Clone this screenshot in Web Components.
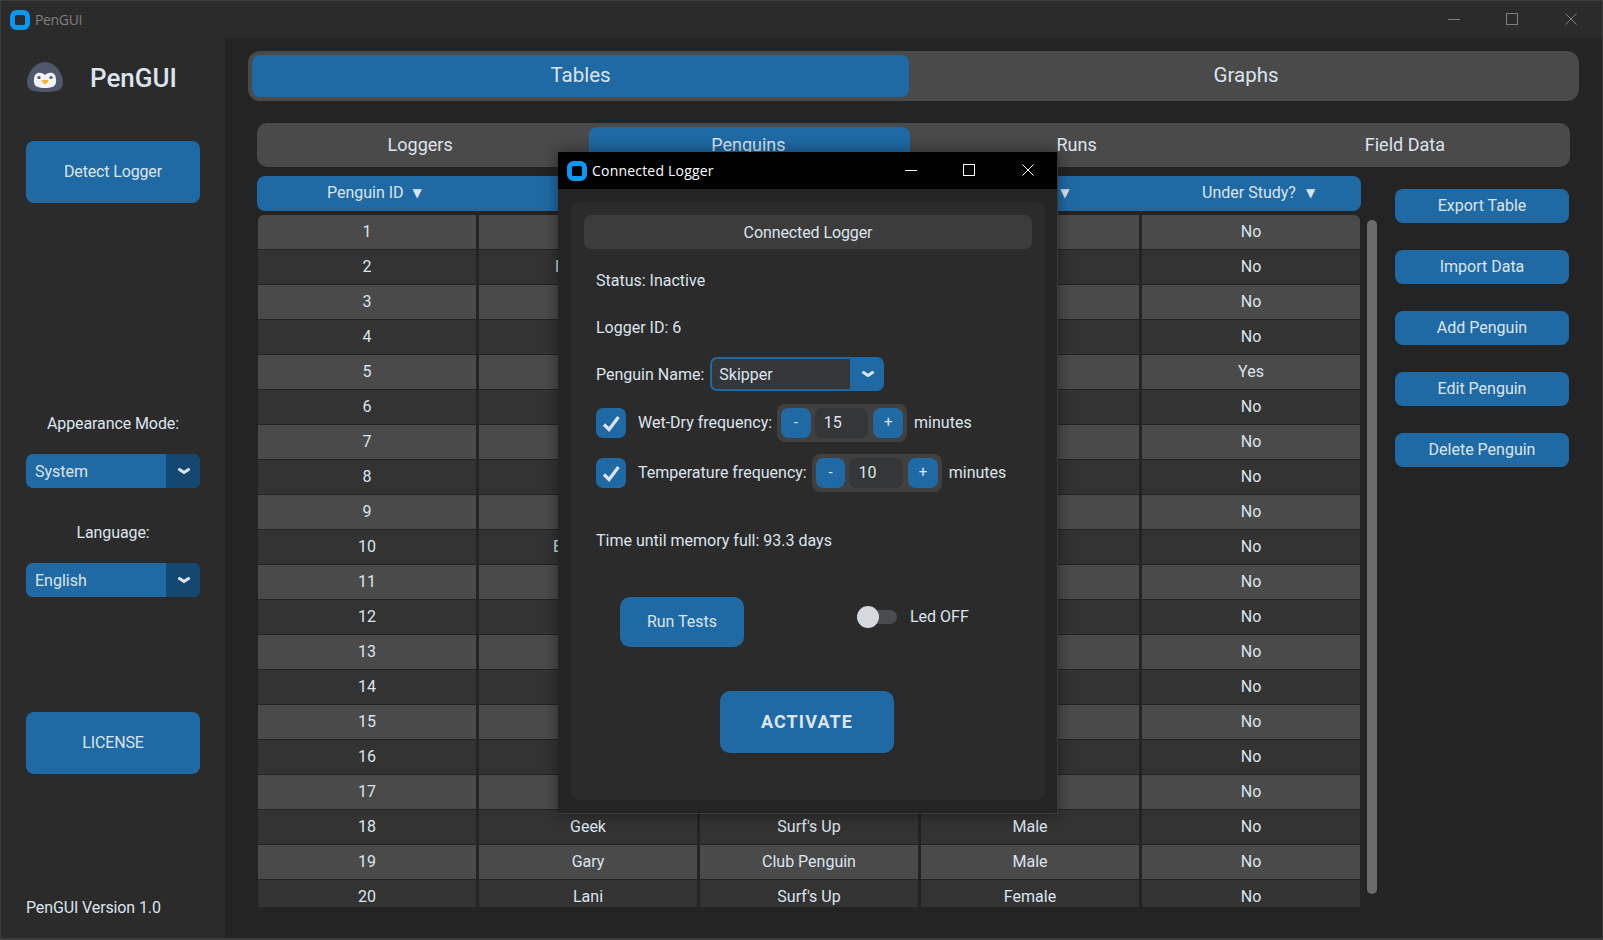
<!DOCTYPE html>
<html>
<head>
<meta charset="utf-8">
<title>PenGUI</title>
<style>
  html, body { margin: 0; height: 940px; overflow: hidden; background: #2b2b2b; }
  body { font: 16px Roboto, "Liberation Sans", sans-serif; color: #dce4ee; }
</style>
</head>
<body>
<pen-app></pen-app>
<script>
const CHEVRON = `<svg width="12" height="7" viewBox="0 0 12 7"><path d="M1.5 1.500 6 4.600 10.500 1.500" fill="none" stroke="#dce4ee" stroke-width="3" stroke-linecap="round" stroke-linejoin="round"/></svg>`;

class PenButton extends HTMLElement {
  constructor() {
    super();
    this.attachShadow({ mode: 'open' });
    this.shadowRoot.innerHTML = `
      <style>
        :host { display: flex; align-items: center; justify-content: center; box-sizing: border-box; padding-bottom: 2px; background: #1f6aa5; border-radius: 8px; color: #dce4ee; }
      </style>
      <slot></slot>
    `;
  }
}
customElements.define('pen-button', PenButton);

class PenCombo extends HTMLElement {
  constructor() {
    super();
    this.attachShadow({ mode: 'open' });
    this.shadowRoot.innerHTML = `
      <style>
        :host { display: flex; width: 174px; height: 34px; box-sizing: border-box; border-radius: 7px; overflow: hidden; background: #1f6aa5; }
        :host([outlined]) { background: #343638; border: 2px solid #1f6aa5; }
        .value { flex: 1; display: flex; align-items: center; padding-left: 9px; }
        :host([outlined]) .value { padding-left: 7px; }
        .arrow { width: 34px; box-sizing: border-box; padding-left: 2px; display: flex; align-items: center; justify-content: center; background: #144870; }
        :host([outlined]) .arrow { background: #1f6aa5; width: 32px; padding-left: 3px; }
      </style>
      <div class="value"><slot></slot></div>
      <div class="arrow">${CHEVRON}</div>
    `;
  }
}
customElements.define('pen-combo', PenCombo);

class WindowBar extends HTMLElement {
  constructor() {
    super();
    this.attachShadow({ mode: 'open' });
    this.shadowRoot.innerHTML = `
      <style>
        :host { display: flex; align-items: center; height: 37px; padding-left: 9px; background: #2b2b2b; color: #7f7f7f; font: 14px "Open Sans", "Noto Sans", sans-serif; }
        :host([active]) { background: #000; color: #fff; }
        svg { display: block; }
        .logo { margin-right: 5px; }
        .title { flex: 1; letter-spacing: -.35px; }
        :host([active]) .title { letter-spacing: .2px; }
        .ctl { width: 58px; margin-top: -2px; display: flex; justify-content: center; }
        .ctl:last-child { margin-left: 1px; margin-right: 2px; }
        :host([active]) .ctl:last-child { margin-right: 0; }
      </style>
      <svg class="logo" width="20" height="20" viewBox="0 0 20 20"><rect x="2.500" y="2.500" width="15" height="15" rx="4" fill="none" stroke="#0a97f5" stroke-width="5"/></svg>
      <span class="title"><slot></slot></span>
      <span class="ctl"><svg width="12" height="12" viewBox="0 0 12 12"><path d="M0 6.500H12" stroke="currentColor" fill="none"/></svg></span>
      <span class="ctl"><svg width="12" height="12" viewBox="0 0 12 12"><rect x=".5" y=".5" width="11" height="11" stroke="currentColor" fill="none"/></svg></span>
      <span class="ctl"><svg width="12" height="12" viewBox="0 0 12 12"><path d="M.5 .5 11.500 11.500M11.500 .5 .5 11.500" stroke="currentColor" fill="none"/></svg></span>
    `;
  }
}
customElements.define('window-bar', WindowBar);

class PenSidebar extends HTMLElement {
  constructor() {
    super();
    this.attachShadow({ mode: 'open' });
    this.shadowRoot.innerHTML = `
      <style>
        :host { display: flex; flex-direction: column; width: 224px; box-sizing: border-box; padding: 23px 0 0 25px; background: #2b2b2b; }
        .brand { display: flex; align-items: center; height: 31px; }
        .brand svg { margin: 1px 0 0 1px; }
        .brand b { margin: 2px 0 0 27px; font-size: 26px; font-weight: 500; }
        pen-button { width: 174px; height: 62px; letter-spacing: -.15px; }
        .label { width: 174px; height: 20px; line-height: 20px; text-align: center; letter-spacing: -.1px; }
        .version { height: 20px; line-height: 20px; margin-top: 124px; letter-spacing: -.12px; }
      </style>
      <div class="brand">
        <svg width="36" height="30" viewBox="0 0 36 30">
          <path d="M18 0C28 0 36 11 36 21 36 28 30 30 18 30 6 30 0 28 0 21 0 11 8 0 18 0Z" fill="#50566b"/>
          <path d="M18 13C20 10 29 8.500 29 17 30 24 26 26 18 26 10 26 6 24 7 17 7 8.500 16 10 18 13Z" fill="#f3f2f8"/>
          <circle cx="12" cy="15.500" r="1.600" fill="#50566b"/>
          <circle cx="24" cy="15.500" r="1.600" fill="#50566b"/>
          <path d="M14.500 18H21.500C21 20.500 19.500 22 18 22 16.500 22 15 20.500 14.500 18Z" fill="#f5b43c"/>
        </svg>
        <b>PenGUI</b>
      </div>
      <pen-button style="margin-top:49px">Detect Logger</pen-button>
      <div class="label" style="margin-top:211px">Appearance Mode:</div>
      <pen-combo style="margin-top:20px">System</pen-combo>
      <div class="label" style="margin-top:35px">Language:</div>
      <pen-combo style="margin-top:20px">English</pen-combo>
      <pen-button style="margin-top:115px">LICENSE</pen-button>
      <div class="version">PenGUI Version 1.0</div>
    `;
  }
}
customElements.define('pen-sidebar', PenSidebar);

class PenTabs extends HTMLElement {
  constructor() {
    super();
    this.attachShadow({ mode: 'open' });
    this.shadowRoot.innerHTML = `
      <style>
        :host { display: block; }
        .main { display: grid; grid-template-columns: 657px 1fr; gap: 8px; height: 42px; padding: 4px; background: #4a4a4a; border-radius: 12px; font-size: 20.5px; }
        .sub { display: grid; grid-template-columns: repeat(4, 1fr); gap: 8px; height: 36px; padding: 4px; margin: 22px 9px 0; background: #4a4a4a; border-radius: 10px; font-size: 18px; }
        span { display: flex; align-items: center; justify-content: center; box-sizing: border-box; padding-bottom: 2px; border-radius: 8px; }
        .sub span { padding-right: 2px; }
        .on { background: #1f6aa5; }
      </style>
      <div class="main"><span class="on">Tables</span><span>Graphs</span></div>
      <div class="sub"><span>Loggers</span><span class="on">Penguins</span><span>Runs</span><span>Field Data</span></div>
    `;
  }
}
customElements.define('pen-tabs', PenTabs);

class PenTable extends HTMLElement {
  constructor() {
    super();
    this.attachShadow({ mode: 'open' });
    // the columns in the middle sit behind the dialog, only the lower rows show
    var rows = [];
    for (var i = 1; i <= 20; i++) rows.push([i, '', '', '', i === 5 ? 'Yes' : 'No']);
    rows[1][1] = '<i style="padding-left:76px">L</i>';
    rows[9][1] = '<i style="padding-left:74px">E</i>';
    rows[17] = [18, 'Geek', "Surf's Up", 'Male', 'No'];
    rows[18] = [19, 'Gary', 'Club Penguin', 'Male', 'No'];
    rows[19] = [20, 'Lani', "Surf's Up", 'Female', 'No'];
    var body = rows.map(r => r.map(c => `<div class="cell">${c}</div>`).join('')).join('');
    this.shadowRoot.innerHTML = `
      <style>
        :host { display: block; width: 1104px; }
        .head { display: grid; grid-template-columns: repeat(5, 1fr); height: 35px; background: #1f6aa5; border-radius: 8px; }
        .head div { display: flex; align-items: center; justify-content: center; box-sizing: border-box; padding: 0 0 2px 16px; gap: 10px; }
        .head div:first-child { padding-left: 14px; gap: 9px; }
        .head u { text-decoration: none; font: 12px "DejaVu Sans", sans-serif; }
        .rows { display: grid; grid-template-columns: repeat(5, 218px); grid-auto-rows: 34px; column-gap: 3px; row-gap: 1px; height: 692px; margin: 4px 1px 0; overflow: hidden; border-radius: 6px 6px 0 0; }
        .cell { display: flex; align-items: center; justify-content: center; box-sizing: border-box; padding-bottom: 2px; background: #333; }
        .cell:nth-child(10n+1), .cell:nth-child(10n+2), .cell:nth-child(10n+3), .cell:nth-child(10n+4), .cell:nth-child(10n+5) { background: #4a4a4a; }
        i { font-style: normal; width: 100%; }
      </style>
      <div class="head">
        <div>Penguin ID <u>▼</u></div>
        <div></div>
        <div></div>
        <div><u style="margin-left:54px">▼</u></div>
        <div>Under Study? <u>▼</u></div>
      </div>
      <div class="rows">${body}</div>
    `;
  }
}
customElements.define('pen-table', PenTable);

class PenMain extends HTMLElement {
  constructor() {
    super();
    this.attachShadow({ mode: 'open' });
    this.shadowRoot.innerHTML = `
      <style>
        :host { display: block; flex: 1; padding: 13px 23px 0; background: #242424; }
        .work { display: flex; margin: 9px 0 0 9px; }
        .bar { width: 10px; height: 674px; margin: 44px 0 0 6px; border-radius: 5px; background: #6b6b6b; }
        .side { display: flex; flex-direction: column; gap: 27px; width: 174px; margin: 13px 0 0 18px; }
        pen-button { height: 34px; }
      </style>
      <pen-tabs></pen-tabs>
      <div class="work">
        <pen-table></pen-table>
        <div class="bar"></div>
        <div class="side">
          <pen-button>Export Table</pen-button>
          <pen-button>Import Data</pen-button>
          <pen-button>Add Penguin</pen-button>
          <pen-button>Edit Penguin</pen-button>
          <pen-button>Delete Penguin</pen-button>
        </div>
      </div>
    `;
  }
}
customElements.define('pen-main', PenMain);

class SpinBox extends HTMLElement {
  constructor() {
    super();
    this.attachShadow({ mode: 'open' });
    this.shadowRoot.innerHTML = `
      <style>
        :host { display: flex; width: 130px; height: 38px; box-sizing: border-box; padding: 4px; gap: 4px; background: #404040; border-radius: 8px; }
        pen-button { width: 30px; font-size: 15px; }
        .val { width: 54px; margin-right: 1px; padding: 0 0 2px 9px; box-sizing: border-box; display: flex; align-items: center; background: #343638; border-radius: 7px; }
      </style>
      <pen-button>-</pen-button>
      <div class="val"><slot></slot></div>
      <pen-button>+</pen-button>
    `;
  }
}
customElements.define('spin-box', SpinBox);

class FreqRow extends HTMLElement {
  constructor() {
    super();
    this.attachShadow({ mode: 'open' });
    this.shadowRoot.innerHTML = `
      <style>
        :host { display: flex; align-items: center; height: 38px; }
        .box { width: 30px; height: 30px; border-radius: 7px; background: #1f6aa5; margin-right: 12px; }
        svg { display: block; }
        span { padding-bottom: 2px; }
        spin-box { margin: 0 7px 0 5px; }
      </style>
      <div class="box"><svg width="30" height="30" viewBox="0 0 30 30"><path d="M8 16.500 13 21.500 22.500 9" fill="none" stroke="#dce4ee" stroke-width="3.200"/></svg></div>
      <span>${this.getAttribute('label')}</span>
      <spin-box>${this.getAttribute('value')}</spin-box>
      <span>minutes</span>
    `;
  }
}
customElements.define('freq-row', FreqRow);

class LoggerDialog extends HTMLElement {
  constructor() {
    super();
    this.attachShadow({ mode: 'open' });
    this.shadowRoot.innerHTML = `
      <style>
        :host { position: absolute; left: 558px; top: 152px; width: 500px; height: 662px; box-sizing: border-box; display: flex; flex-direction: column; background: #242424; border: solid #3a3a3a; border-width: 0 1px 1px 0; box-shadow: 0 0 14px rgba(0,0,0,.45); }
        .frame { flex: 1; margin: 13px 12px 13px 13px; padding: 13px; background: #2b2b2b; border-radius: 8px; display: flex; flex-direction: column; }
        .head { height: 34px; display: flex; align-items: center; justify-content: center; background: #3c3c3c; border-radius: 7px; flex: none; letter-spacing: -.1px; }
        .line { height: 20px; line-height: 20px; margin-left: 12px; flex: none; }
        .name { display: flex; align-items: center; gap: 6px; margin: 19px 0 0 12px; }
        freq-row { margin-left: 12px; }
        .tests { display: flex; align-items: flex-start; margin: 46px 0 0 36px; }
        .led { display: flex; align-items: center; height: 23px; margin: 8px 0 0 113px; }
        .track { position: relative; width: 40px; height: 14px; border-radius: 7px; background: #4a4d50; margin-right: 13px; }
        .knob { position: absolute; left: 0; top: -4px; width: 22px; height: 22px; border-radius: 50%; background: #d5d9de; }
        .activate { width: 174px; height: 62px; margin: 44px 0 0 136px; font-size: 18px; font-weight: 700; letter-spacing: 1.1px; border-radius: 10px; }
        .run { width: 124px; height: 50px; border-radius: 10px; }
      </style>
      <window-bar active>Connected Logger</window-bar>
      <div class="frame">
        <div class="head">Connected Logger</div>
        <div class="line" style="margin-top:22px">Status: Inactive</div>
        <div class="line" style="margin-top:27px">Logger ID: 6</div>
        <div class="name"><span>Penguin Name:</span><pen-combo outlined>Skipper</pen-combo></div>
        <freq-row label="Wet-Dry frequency:" value="15" style="margin-top:13px"></freq-row>
        <freq-row label="Temperature frequency:" value="10" style="margin-top:12px"></freq-row>
        <div class="line" style="margin-top:39px">Time until memory full: 93.3 days</div>
        <div class="tests">
          <pen-button class="run">Run Tests</pen-button>
          <div class="led"><div class="track"><div class="knob"></div></div><span>Led OFF</span></div>
        </div>
        <pen-button class="activate">ACTIVATE</pen-button>
      </div>
    `;
  }
}
customElements.define('logger-dialog', LoggerDialog);

class PenApp extends HTMLElement {
  constructor() {
    super();
    this.attachShadow({ mode: 'open' });
    this.shadowRoot.innerHTML = `
      <style>
        :host { position: relative; display: flex; flex-direction: column; width: 1603px; height: 940px; box-sizing: border-box; border: 1px solid #3c3c3c; border-bottom-width: 2px; overflow: hidden; }
        .body { flex: 1; display: flex; min-height: 0; }
        logger-dialog { margin: -1px 0 0 -1px; }
      </style>
      <window-bar>PenGUI</window-bar>
      <div class="body">
        <pen-sidebar></pen-sidebar>
        <pen-main></pen-main>
      </div>
      <logger-dialog></logger-dialog>
    `;
  }
}
customElements.define('pen-app', PenApp);
</script>
</body>
</html>
